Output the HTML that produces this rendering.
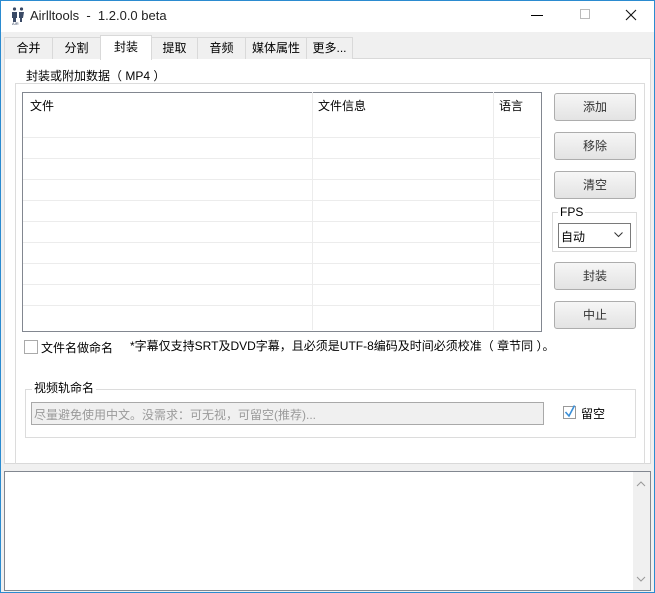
<!DOCTYPE html>
<html><head><meta charset="utf-8"><style>
*{box-sizing:border-box;margin:0;padding:0}
body{width:655px;height:593px;background:#f0f0f0;font-family:"Liberation Sans","Noto Sans CJK SC",sans-serif;font-size:12px;color:#000;position:relative;overflow:hidden}
.a{position:absolute}
.frame{left:0;top:0;width:655px;height:593px;border:1px solid #2b8bd0;z-index:9;pointer-events:none}
.title{left:0;top:0;width:655px;height:32px;background:#fff}
.tab{top:37px;height:22px;border:1px solid #d9d9d9;border-bottom:none;background:#f0f0f0;text-align:center;line-height:20px}
.panel{left:4px;top:58px;width:647px;height:406px;background:#fff;border:1px solid #d9d9d9}
.grp{border:1px solid #dcdcdc}
.leg{background:#fff;padding:0 2px;line-height:14px}
.btn{left:554px;width:82px;height:28px;border:1px solid #adadad;border-radius:3px;background:linear-gradient(#f6f6f6,#e3e3e3);text-align:center;line-height:26px;color:#333}
.hl{height:1px;background:#ececec;left:23px;width:517px}
.vl{width:1px;background:#ececec;top:92px;height:238px}
</style></head><body>
<div class="a frame"></div>
<div class="a title"></div>
<svg class="a" style="left:11px;top:7px" width="14" height="18" viewBox="0 0 14 18"><circle cx="3.5" cy="2" r="1.6" fill="#3a4a66"/><circle cx="10.5" cy="2" r="1.6" fill="#3a4a66"/><path d="M1 5h5v6H5v4H2v-4H1z" fill="#3a4a66"/><path d="M8 5h5l-1 6h-1v4H9v-4H8z" fill="#3a4a66"/><text x="1" y="18" font-size="4" fill="#3a4a66" font-family="Liberation Sans">AIR</text></svg>
<div class="a" style="left:30px;top:8px;font-size:13px;color:#222">Airlltools &nbsp;- &nbsp;1.2.0.0 beta</div>
<div class="a" style="left:531px;top:15px;width:12px;height:1px;background:#000"></div>
<div class="a" style="left:580px;top:9px;width:10px;height:10px;border:1px solid #bbb"></div>
<svg class="a" style="left:625px;top:9px" width="12" height="12"><path d="M1 1L11 11M11 1L1 11" stroke="#111" stroke-width="1.1"/></svg>

<div class="a panel"></div>
<div class="a tab" style="left:4px;width:49px">合并</div>
<div class="a tab" style="left:52px;width:49px">分割</div>
<div class="a tab" style="left:151px;width:47px">提取</div>
<div class="a tab" style="left:197px;width:49px">音频</div>
<div class="a tab" style="left:245px;width:62px">媒体属性</div>
<div class="a tab" style="left:306px;width:47px">更多...</div>
<div class="a tab" style="left:100px;top:35px;height:25px;width:52px;background:#fff;line-height:22px">封装</div>

<div class="a grp" style="left:15px;top:83px;width:630px;height:381px;border-bottom:none"></div>
<div class="a leg" style="left:24px;top:69px">封装或附加数据（ MP4 ）</div>

<div class="a" style="left:22px;top:92px;width:520px;height:240px;border:1px solid #828790;background:#fff"></div>
<div class="a" style="left:30px;top:97px">文件</div>
<div class="a" style="left:318px;top:97px">文件信息</div>
<div class="a" style="left:499px;top:97px">语言</div>
<div class="a vl" style="left:312px"></div>
<div class="a vl" style="left:493px"></div>
<div class="a hl" style="top:137px"></div><div class="a hl" style="top:158px"></div><div class="a hl" style="top:179px"></div><div class="a hl" style="top:200px"></div><div class="a hl" style="top:221px"></div><div class="a hl" style="top:242px"></div><div class="a hl" style="top:263px"></div><div class="a hl" style="top:284px"></div><div class="a hl" style="top:305px"></div>

<div class="a btn" style="top:93px">添加</div>
<div class="a btn" style="top:132px">移除</div>
<div class="a btn" style="top:171px">清空</div>
<div class="a btn" style="top:262px">封装</div>
<div class="a btn" style="top:301px">中止</div>
<div class="a grp" style="left:552px;top:212px;width:85px;height:40px"></div>
<div class="a leg" style="left:558px;top:205px">FPS</div>
<div class="a" style="left:558px;top:223px;width:73px;height:25px;border:1px solid #7a7a7a;background:#fff;padding:4px 0 0 2px">自动</div>
<svg class="a" style="left:614px;top:232px" width="9" height="6"><path d="M0.5 0.5L4.5 4.5L8.5 0.5" stroke="#333" fill="none"/></svg>

<div class="a" style="left:24px;top:340px;width:14px;height:14px;border:1px solid #aaa;background:#fff"></div>
<div class="a" style="left:41px;top:339px">文件名做命名</div>
<div class="a" style="left:130px;top:337px">*字幕仅支持SRT及DVD字幕，且必须是UTF-8编码及时间必须校准（ 章节同 ）。</div>

<div class="a grp" style="left:25px;top:389px;width:611px;height:49px"></div>
<div class="a leg" style="left:32px;top:381px">视频轨命名</div>
<div class="a" style="left:31px;top:402px;width:513px;height:23px;border:1px solid #a9a9a9;background:#f0f0f0;color:#9a9a9a;padding:3px 0 0 2px">尽量避免使用中文。没需求：可无视，可留空(推荐)...</div>
<div class="a" style="left:563px;top:406px;width:13px;height:13px;border:1px solid #999;background:#fff"></div>
<svg class="a" style="left:564px;top:404px" width="12" height="14"><path d="M1.5 8L5 12L10.5 1.5" stroke="#3a8fd8" stroke-width="1.6" fill="none"/></svg>
<div class="a" style="left:581px;top:405px">留空</div>

<div class="a" style="left:4px;top:471px;width:647px;height:120px;border:1px solid #828790;background:#fff"></div>
<div class="a" style="left:633px;top:472px;width:17px;height:118px;background:#f0f0f0"></div>
<svg class="a" style="left:636px;top:481px" width="10" height="6"><path d="M1 5L5 1L9 5" stroke="#999" fill="none"/></svg>
<svg class="a" style="left:636px;top:576px" width="10" height="6"><path d="M1 1L5 5L9 1" stroke="#999" fill="none"/></svg>
</body></html>
